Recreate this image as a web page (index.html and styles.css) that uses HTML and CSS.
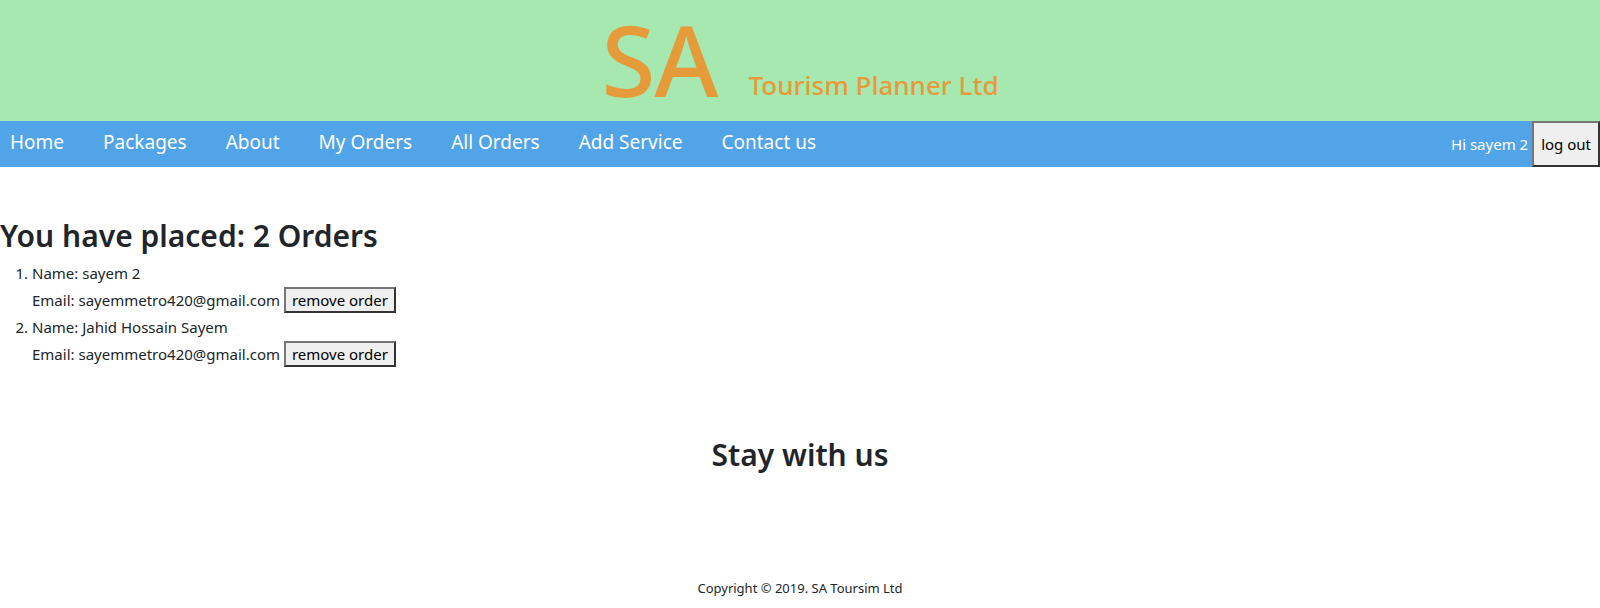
FILE: index.html
```html
<!DOCTYPE html>
<html>
<head>
<meta charset="utf-8">
<link rel="stylesheet" href="styles.css">
</head>
<body>
<header class="banner">
  <span class="logo">SA</span>
  <span class="tagline">Tourism Planner Ltd</span>
</header>
<nav class="navbar">
  <div class="nav-links">
    <a href="#">Home</a>
    <a href="#">Packages</a>
    <a href="#">About</a>
    <a href="#">My Orders</a>
    <a href="#">All Orders</a>
    <a href="#">Add Service</a>
    <a href="#">Contact us</a>
  </div>
  <div class="nav-user">
    <span class="greet">Hi sayem 2</span>
    <button class="btn logout">log out</button>
  </div>
</nav>
<main class="orders">
  <h2 class="title">You have placed: 2 Orders</h2>
  <ol class="order-list">
    <li>
      <div class="line">Name: sayem 2</div>
      <div class="line">Email: sayemmetro420@gmail.com <button class="btn">remove order</button></div>
    </li>
    <li>
      <div class="line">Name: Jahid Hossain Sayem</div>
      <div class="line">Email: sayemmetro420@gmail.com <button class="btn">remove order</button></div>
    </li>
  </ol>
</main>
<footer class="footer">
  <h2 class="stay">Stay with us</h2>
  <p class="copy">Copyright © 2019. SA Toursim Ltd</p>
</footer>
</body>
</html>
```

FILE: styles.css
```css
* { box-sizing: border-box; }
body {
  margin: 0;
  font-family: "Noto Sans", "Open Sans", sans-serif;
  color: #212529;
  font-size: 15px;
  line-height: 1.5;
}
.banner {
  background: #a6e8b0;
  height: 121px;
  display: flex;
  justify-content: center;
  align-items: baseline;
  gap: 31px;
  padding-top: 4px;
  color: #e59b3a;
}
.logo {
  font-size: 98px;
  line-height: 110px;
  font-weight: 500;
  letter-spacing: -1px;
}
.tagline {
  font-size: 26px;
  font-weight: 500;
  position: relative;
  top: -2px;
}
.navbar {
  background: #51a4e8;
  height: 46px;
  display: flex;
  justify-content: space-between;
  align-items: stretch;
}
.nav-links {
  display: flex;
  align-items: center;
  padding-left: 10px;
  padding-bottom: 3px;
  gap: 39px;
}
.nav-links a {
  color: #fff;
  text-decoration: none;
  font-size: 19px;
}
.nav-user {
  display: flex;
  align-items: center;
}
.greet {
  color: #fff;
  font-size: 15px;
  margin-right: 4px;
}
.btn {
  font-family: inherit;
  font-size: 15px;
  background: #efefef;
  color: #000;
  border: 2px solid #444;
  border-color: #767676 #333 #333 #767676;
  padding: 0 6px;
  line-height: 22px;
  cursor: pointer;
}
.logout {
  height: 46px;
  padding: 0 7px;
}
.orders {
  padding-top: 51px;
}
.title {
  margin: 0;
  font-size: 30px;
  font-weight: 600;
  line-height: 1.2;
}
.order-list {
  margin: 6px 0 0;
  padding-left: 32px;
}
.line {
  line-height: 27px;
}
.footer {
  text-align: center;
  padding-top: 69px;
}
.stay {
  margin: 0;
  font-size: 30px;
  font-weight: 600;
  line-height: 1.2;
}
.copy {
  margin: 106px 0 0;
  font-size: 13px;
}
```
